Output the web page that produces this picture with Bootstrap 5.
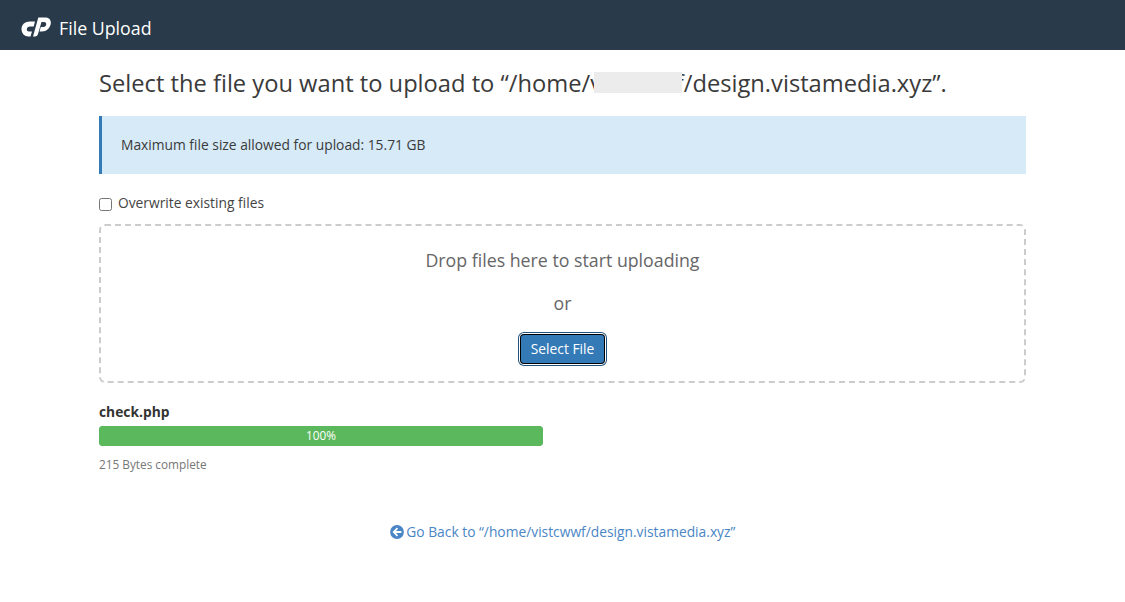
<!DOCTYPE html>
<html lang="en">
<head>
<meta charset="utf-8">
<title>File Upload</title>
<link href="https://cdn.jsdelivr.net/npm/bootstrap@5.3.0/dist/css/bootstrap.min.css" rel="stylesheet">
<style>
body { font-family: "Open Sans", sans-serif; font-size: 13.8px; color: #333; background: #fff; }
.top-strip { background: #293a4a; height: 50px; padding: 6px 0 0 21px; color: #fff; font-size: 17.8px; }
.top-strip svg { margin-top: -3px; margin-right: 8px; }
.page-wrap { width: 927px; margin-left: 99px; }
.page-title { font-size: 23.7px; line-height: 34px; font-weight: 400; margin: 16px 0 16px; color: #3a3a3a; position: relative; }
.smudge { position: absolute; left: 495px; top: 6px; width: 88px; height: 21px; background: #ececec; }
.note-box { background: #d6eaf8; border-left: 3px solid #337ab7; height: 58px; padding: 0 0 0 19px; margin-bottom: 18px; color: #3a3a3a; }
.over-check { height: 22px; margin-bottom: 10px; color: #444; }
.over-check span { padding-top: 1px; }
.over-check input { width: 13px; height: 13px; margin: 6px 6px 0 0; }
.drop-zone { height: 159px; border: 2px dashed #ccc; border-radius: 6px; color: #666; }
.drop-line { font-size: 17.75px; line-height: 24px; }
.pick-btn { background: #337ab7; color: #fff; font-size: 13.8px; line-height: 20px; padding: 4px 10px; border: 0; border-radius: 3px; box-shadow: 0 0 0 1px #000, 0 0 0 2px #fff, 0 0 0 3px #23527c; }
.pick-btn:hover { background: #337ab7; color: #fff; }
.file-name { font-weight: 700; line-height: 20px; margin-top: 19px; color: #333; }
.bar-track { width: 444px; height: 20px; margin-top: 4px; border-radius: 4px; background: #5cb85c; font-size: 12px; }
.bar-fill { background: #5cb85c; color: #fff; font-size: 11.8px; }
.done-note { font-size: 11.8px; line-height: 17px; color: #777; margin-top: 10px; }
.back-row { margin-top: 49px; line-height: 20px; }
.back-row a { color: #4a86c5; text-decoration: none; }
.back-row svg { vertical-align: -2px; margin-right: -1px; }
</style>
</head>
<body>
<header class="top-strip d-flex align-items-center">
  <svg width="30" height="20" viewBox="0 0 30 20" aria-hidden="true">
    <path fill="#fff" d="M14 4.500H9C4 4.500.5 7.500.5 12c0 4.500 3 7.500 7 7.500h2l1.500-5H8c-1.700 0-2.500-1.200-2.100-2.700.4-1.500 1.600-2.300 3.100-2.300h3.700z"/>
    <path fill="#fff" d="M12 19.500 17.300.5H24c4 0 6.500 2.500 5.700 6.500-.7 4-4.200 7.500-8.700 7.500h-2.500l1.300-4.500h2.700c1.500 0 2.500-1 2.700-2.500.2-1.500-.7-2.500-2.200-2.500h-2.500L17 17c-.5 2-2 2.500-4 2.500z"/>
  </svg>
  <span>File Upload</span>
</header>
<main class="page-wrap">
  <h1 class="page-title">Select the file you want to upload to “/home/vistcwwf/design.vistamedia.xyz”.<span class="smudge"></span></h1>
  <div class="note-box d-flex align-items-center">Maximum file size allowed for upload: 15.71 GB</div>
  <label class="over-check d-flex align-items-start"><input type="checkbox"><span>Overwrite existing files</span></label>
  <div class="drop-zone d-flex flex-column align-items-center">
    <div class="drop-line" style="margin-top:22px">Drop files here to start uploading</div>
    <div class="drop-line" style="margin-top:19px">or</div>
    <button type="button" class="btn pick-btn" style="margin-top:20px">Select File</button>
  </div>
  <div class="file-name">check.php</div>
  <div class="progress bar-track"><div class="progress-bar bar-fill" style="width:100%">100%</div></div>
  <div class="done-note">215 Bytes complete</div>
  <div class="back-row text-center">
    <a href="#"><svg width="14" height="14" viewBox="0 0 14 14" aria-hidden="true"><circle cx="7" cy="7" r="6.900" fill="#4a86c5"/><path fill="#fff" d="M6.900 2.600 2.500 7l4.400 4.400 1.200-1.200L6 8.100h5.400V5.900H6l2.100-2.100z"/></svg> Go Back to “/home/vistcwwf/design.vistamedia.xyz”</a>
  </div>
</main>
<script src="https://cdn.jsdelivr.net/npm/bootstrap@5.3.0/dist/js/bootstrap.bundle.min.js"></script>
</body>
</html>
